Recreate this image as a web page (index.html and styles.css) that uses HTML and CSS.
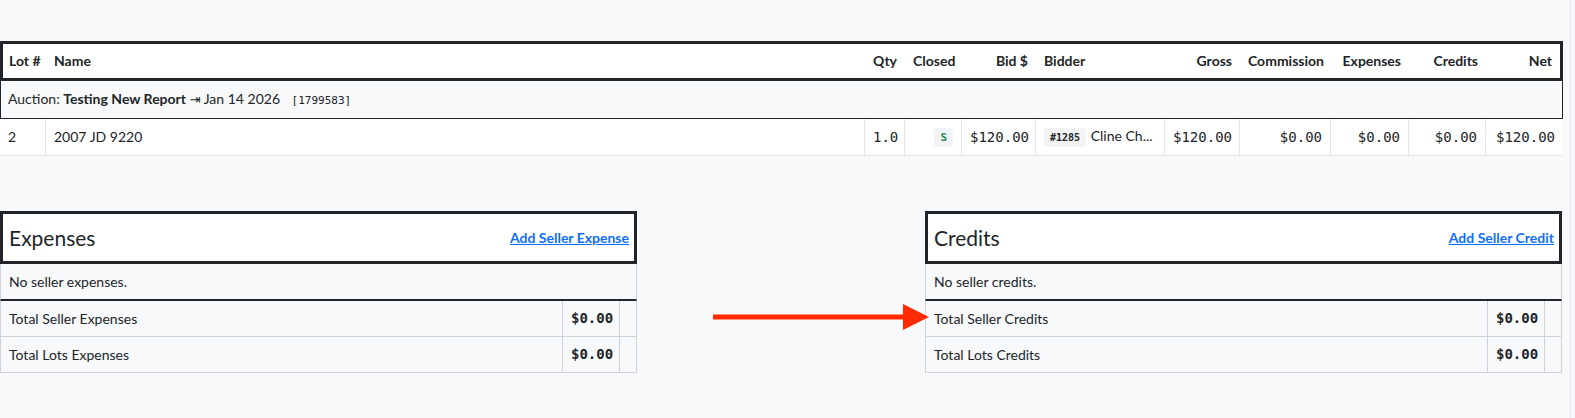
FILE: index.html
```html
<!DOCTYPE html>
<html lang="en">
<head>
<meta charset="utf-8">
<title>Seller Report</title>
<link rel="stylesheet" href="styles.css">
</head>
<body>
<div class="page">
  <table class="lots">
    <colgroup>
      <col class="w-lot"><col class="w-name"><col class="w-qty"><col class="w-closed"><col class="w-bid"><col class="w-bidder"><col class="w-gross"><col class="w-comm"><col class="w-exp"><col class="w-cred"><col class="w-net">
    </colgroup>
    <thead>
      <tr>
        <th class="l">Lot #</th>
        <th class="l">Name</th>
        <th>Qty</th>
        <th>Closed</th>
        <th>Bid $</th>
        <th class="l">Bidder</th>
        <th>Gross</th>
        <th>Commission</th>
        <th>Expenses</th>
        <th>Credits</th>
        <th>Net</th>
      </tr>
    </thead>
    <tbody>
      <tr class="group">
        <td colspan="11">Auction: <strong>Testing New Report</strong> <span class="to">⇥</span> Jan 14 2026 <span class="auc-id">[1799583]</span></td>
      </tr>
      <tr class="lot-row">
        <td>2</td>
        <td>2007 JD 9220</td>
        <td class="num">1.0</td>
        <td class="num"><span class="badge-s">S</span></td>
        <td class="num">$120.00</td>
        <td><span class="bidno">#1285</span> Cline Ch...</td>
        <td class="num">$120.00</td>
        <td class="num">$0.00</td>
        <td class="num">$0.00</td>
        <td class="num">$0.00</td>
        <td class="num">$120.00</td>
      </tr>
    </tbody>
  </table>

  <div class="panels">
    <section class="panel">
      <div class="panel-head">
        <h5>Expenses</h5>
        <a href="#">Add Seller Expense</a>
      </div>
      <div class="empty">No seller expenses.</div>
      <table class="totals">
        <colgroup><col><col class="w-val"><col class="w-pad"></colgroup>
        <tr><td>Total Seller Expenses</td><td class="val">$0.00</td><td></td></tr>
        <tr><td>Total Lots Expenses</td><td class="val">$0.00</td><td></td></tr>
      </table>
    </section>

    <section class="panel">
      <div class="panel-head">
        <h5>Credits</h5>
        <a href="#">Add Seller Credit</a>
      </div>
      <div class="empty">No seller credits.</div>
      <table class="totals">
        <colgroup><col><col class="w-val"><col class="w-pad"></colgroup>
        <tr><td>Total Seller Credits</td><td class="val">$0.00</td><td></td></tr>
        <tr><td>Total Lots Credits</td><td class="val">$0.00</td><td></td></tr>
      </table>
    </section>
  </div>

  <svg class="annot-arrow" width="222" height="30" viewBox="0 0 222 30" aria-hidden="true">
    <line x1="3" y1="15" x2="197" y2="15" stroke="#ff2a00" stroke-width="5"/>
    <polygon points="193,2 219,15 193,28" fill="#ff2a00"/>
  </svg>
</div>
</body>
</html>
```

FILE: styles.css
```css
* { box-sizing: border-box; }

body {
  margin: 0;
  background: #f8f9fa;
  font-family: Lato, "Noto Sans", "Liberation Sans", sans-serif;
  font-size: 14px;
  color: #212529;
}

.page {
  position: relative;
  width: 1571px;
  min-height: 418px;
  border-right: 1px solid #e3e6ea;
  padding-top: 41px;
}

/* ---------- lots table ---------- */
.lots {
  width: 1563px;
  border-collapse: separate;
  border-spacing: 0;
  table-layout: fixed;
}

.w-lot { width: 46px; }
.w-name { width: 819px; }
.w-qty { width: 40px; }
.w-closed { width: 57px; }
.w-bid { width: 74px; }
.w-bidder { width: 129px; }
.w-gross { width: 75px; }
.w-comm { width: 91px; }
.w-exp { width: 78px; }
.w-cred { width: 77px; }
.w-net { width: 77px; }

.lots th {
  background: #fff;
  font-weight: 700;
  text-align: right;
  padding: 8px;
  line-height: 18px;
  border-top: 3px solid #212529;
  border-bottom: 3px solid #212529;
  white-space: nowrap;
}
.lots th:first-child {
  border-left: 3px solid #212529;
  padding-left: 6px;
}
.lots th:last-child {
  border-right: 3px solid #212529;
}
.lots th.l { text-align: left; }

.group td {
  background: #f8f9fa;
  border: 1px solid #212529;
  border-top: 0;
  padding: 8px 7px;
  line-height: 19px;
  white-space: nowrap;
}
.group strong { font-weight: 700; }
.to {
  font-family: "DejaVu Sans", sans-serif;
  font-size: 13px;
}
.auc-id {
  font-family: "DejaVu Sans Mono", "Liberation Mono", monospace;
  font-size: 11px;
  margin-left: 8px;
}

.lot-row td {
  background: #fff;
  padding: 8px;
  line-height: 18px;
  border-bottom: 1px solid #e3e6ea;
  border-right: 1px solid #e3e6ea;
  white-space: nowrap;
  overflow: hidden;
}
.lot-row td:last-child { border-right: 0; }

.num {
  text-align: right;
  font-family: "DejaVu Sans Mono", "Liberation Mono", monospace;
}

.badge-s {
  display: inline-block;
  background: #f1f3f5;
  color: #198754;
  font-weight: 700;
  font-size: 11px;
  line-height: 19px;
  padding: 0 6px;
  border-radius: 4px;
  vertical-align: middle;
}

.bidno {
  display: inline-block;
  background: #f1f3f5;
  font-family: "DejaVu Sans Mono", "Liberation Mono", monospace;
  font-weight: 700;
  font-size: 10px;
  line-height: 19px;
  padding: 0 6px;
  border-radius: 4px;
  margin-right: 1px;
  vertical-align: middle;
}

/* ---------- panels ---------- */
.panels {
  display: flex;
  justify-content: space-between;
  width: 1562px;
  margin-top: 55px;
}

.panel { width: 637px; }

.panel-head {
  display: flex;
  align-items: center;
  justify-content: space-between;
  height: 53px;
  background: #fff;
  border: 3px solid #212529;
  padding: 0 5px 0 6px;
}
.panel-head h5 {
  margin: 0;
  font-size: 21px;
  font-weight: 400;
}
.panel-head a {
  color: #0d6efd;
  font-weight: 700;
  font-size: 14px;
  text-decoration: underline;
}

.empty {
  background: #f8f9fa;
  border: 1px solid #cfd3d8;
  border-top: 0;
  border-bottom: 2px solid #212529;
  padding: 8px;
  line-height: 19px;
}

.totals {
  width: 100%;
  border-collapse: collapse;
  table-layout: fixed;
}
.w-val { width: 57px; }
.w-pad { width: 17px; }
.totals td {
  background: #f8f9fa;
  border: 1px solid #cfd3d8;
  border-top: 0;
  padding: 8px;
  line-height: 19px;
  white-space: nowrap;
}
.totals td.val {
  text-align: right;
  font-family: "DejaVu Sans Mono", "Liberation Mono", monospace;
  font-weight: 700;
}

/* ---------- annotation ---------- */
.annot-arrow {
  position: absolute;
  left: 710px;
  top: 302px;
}
```
